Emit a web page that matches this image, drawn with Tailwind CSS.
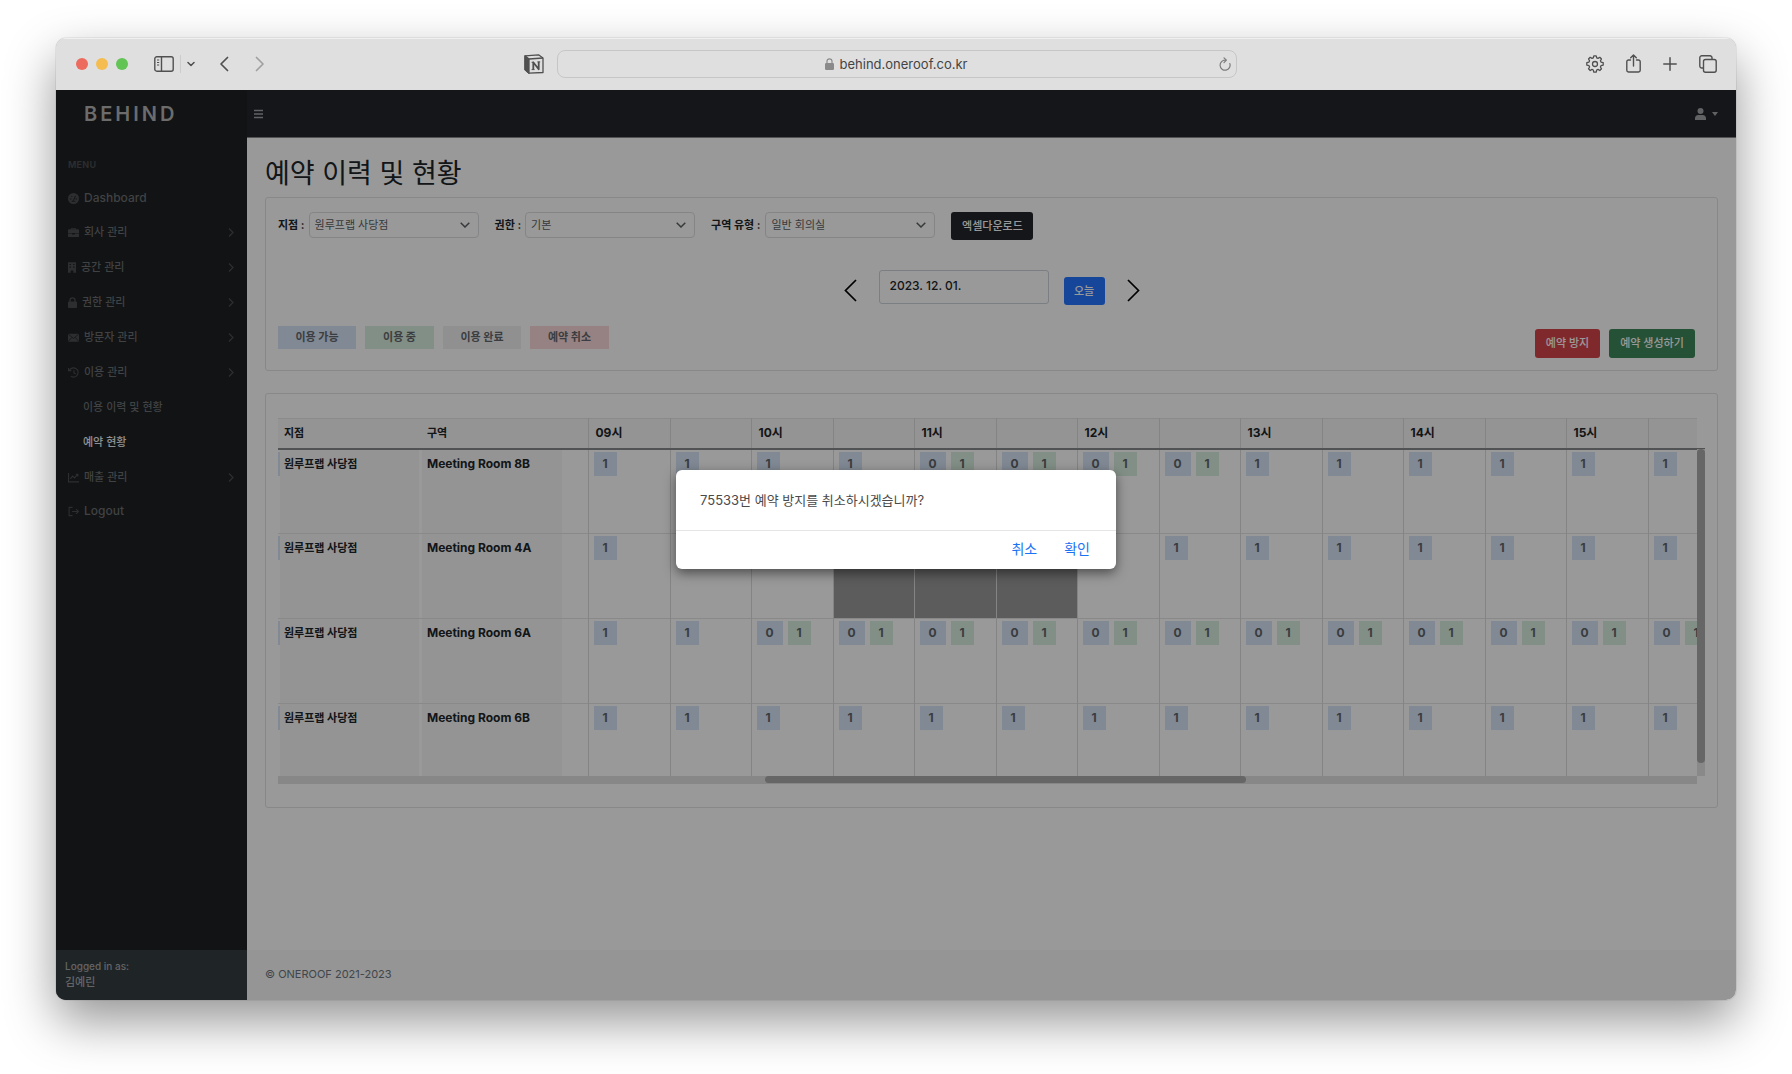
<!DOCTYPE html>
<html lang="ko">
  <head>
    <meta charset="UTF-8" />
    <meta name="viewport" content="width=device-width, initial-scale=1.0" />
    <title>BEHIND - 예약 이력 및 현황</title>

    <script src="https://cdn.jsdelivr.net/npm/@tailwindcss/browser@4"></script>
  </head>
  <body
    class="flex min-h-screen flex-col bg-white px-14 pt-[38px] pb-[74px] font-['Inter','Noto_Sans_CJK_KR',sans-serif] text-[11px] text-[#212529]"
  >
    <!-- Browser window -->
    <div
      class="flex flex-1 flex-col overflow-hidden rounded-[10px] shadow-[0_0_1px_rgba(0,0,0,0.6),0_21px_50px_rgba(0,0,0,0.42)]"
    >
      <!-- Browser toolbar -->
      <header
        class="flex h-[52px] shrink-0 items-center border-t border-[#f0f0f0] bg-[#dfdfdf] pb-[2px] text-[#505050]"
      >
        <div class="flex flex-1 items-center pl-5">
          <div class="flex gap-2">
            <span class="size-3 rounded-full bg-[#ed6a5e]"></span>
            <span class="size-3 rounded-full bg-[#f5bd4f]"></span>
            <span class="size-3 rounded-full bg-[#61c454]"></span>
          </div>
          <button class="ml-[26px]" aria-label="Sidebar">
            <svg class="h-4 w-5" viewBox="0 0 20 16" fill="none" stroke="currentColor" stroke-width="1.4">
              <rect x="0.8" y="0.8" width="18.4" height="14.4" rx="2" />
              <path d="M7.5 1v14" />
              <path d="M3 4h2.2M3 6.5h2.2M3 9h2.2" stroke-width="1" />
            </svg>
          </button>
          <span class="ml-1.5 h-[18px] w-px bg-[#cccccc]"></span>
          <button class="ml-1.5" aria-label="Tab groups">
            <svg class="size-2" viewBox="0 0 8 8" fill="none" stroke="currentColor" stroke-width="1.5" stroke-linecap="round" stroke-linejoin="round">
              <path d="M1 2.5l3 3 3-3" />
            </svg>
          </button>
          <button class="ml-6" aria-label="Back">
            <svg class="h-4 w-[10px]" viewBox="0 0 10 16" fill="none" stroke="currentColor" stroke-width="1.7" stroke-linecap="round" stroke-linejoin="round">
              <path d="M8.5 1.5L2 8l6.500 6.500" />
            </svg>
          </button>
          <button class="ml-[26px] text-[#a0a0a0]" aria-label="Forward">
            <svg class="h-4 w-[10px]" viewBox="0 0 10 16" fill="none" stroke="currentColor" stroke-width="1.7" stroke-linecap="round" stroke-linejoin="round">
              <path d="M1.500 1.500L8 8l-6.500 6.500" />
            </svg>
          </button>
          <button class="mr-[13px] ml-auto" aria-label="Notion">
            <svg class="size-5" viewBox="0 0 20 20" fill="none" stroke="currentColor" stroke-width="1.3" stroke-linejoin="round">
              <path d="M1 1.800L14.500 .8 19 4v14.500l-14 .7L1 15.500z" />
              <path d="M1 1.800L5 5v14.200L1 15.500z" fill="currentColor" />
              <path d="M5 5l14-1" />
              <path d="M9.300 15.500V8.300l5.400 7V7.800" stroke-width="1.800" />
              <path d="M7.600 8.300h2M7.600 15.600h3M13.400 7.900h2.800" stroke-width="1" />
            </svg>
          </button>
        </div>

        <div
          class="flex h-7 w-[680px] items-center rounded-lg border border-[#c6c6c6] pr-[5px] pl-4"
        >
          <div class="flex flex-1 items-center justify-center gap-[6px]">
            <svg class="h-3 w-[9px] text-[#8a8a8a]" viewBox="0 0 9 12">
              <rect y="5" width="9" height="7" rx="1.300" fill="currentColor" />
              <path d="M2 5.500V3.300a2.500 2.500 0 0 1 5 0v2.200" fill="none" stroke="currentColor" stroke-width="1.200" />
            </svg>
            <span class="text-[13px] leading-4 text-[#444444]">behind.oneroof.co.kr</span>
          </div>
          <button class="text-[#7c7c7c]" aria-label="Reload">
            <svg class="h-[14px] w-3" viewBox="0 0 12 14" fill="none" stroke="currentColor" stroke-width="1.200" stroke-linecap="round" stroke-linejoin="round">
              <path d="M10.800 6.500A5 5 0 1 1 6.500 3.200" />
              <path d="M5 0.800l2.400 2.400L5 5.600" />
            </svg>
          </button>
        </div>

        <div class="flex flex-1 items-center justify-end gap-[22px] pr-[19px]">
          <button aria-label="Settings">
            <svg class="size-[18px]" viewBox="0 0 18 18" fill="none" stroke="currentColor" stroke-width="1.300" stroke-linejoin="round">
              <path d="M7.800 0.800h2.400l.5 2 1.300.6 1.800-1.100 1.700 1.700-1.100 1.800.6 1.300 2.200.6v2.400l-2.200.6-.6 1.300 1.100 1.800-1.700 1.700-1.800-1.100-1.300.6-.5 2.200H7.800l-.5-2.200-1.300-.6-1.800 1.100-1.700-1.700 1.100-1.800-.6-1.300-2.200-.6V7.700l2.200-.6.6-1.300-1.100-1.800 1.700-1.700L6 3.400l1.300-.6z" />
              <circle cx="9" cy="9" r="2.500" />
            </svg>
          </button>
          <button aria-label="Share">
            <svg class="h-[19px] w-[15px]" viewBox="0 0 15 19" fill="none" stroke="currentColor" stroke-width="1.400" stroke-linecap="round" stroke-linejoin="round">
              <path d="M4.500 6H2.500A1.700 1.700 0 0 0 .8 7.700v8.600A1.700 1.700 0 0 0 2.500 18h10a1.700 1.700 0 0 0 1.700-1.700V7.700A1.700 1.700 0 0 0 12.500 6h-2" />
              <path d="M7.500 12V1M4.700 3.700L7.500 1l2.800 2.700" />
            </svg>
          </button>
          <button aria-label="New tab">
            <svg class="size-[14px]" viewBox="0 0 14 14" fill="none" stroke="currentColor" stroke-width="1.500" stroke-linecap="round">
              <path d="M7 .8v12.400M.8 7h12.400" />
            </svg>
          </button>
          <button aria-label="Tabs">
            <svg class="size-[18px]" viewBox="0 0 18 18" fill="none" stroke="currentColor" stroke-width="1.400" stroke-linejoin="round">
              <rect x="4.500" y="4.500" width="12.700" height="12.700" rx="2" />
              <path d="M4.500 13H3A2 2 0 0 1 .8 11V3A2 2 0 0 1 3 .8h8A2 2 0 0 1 13 3v1.500" />
            </svg>
          </button>
        </div>
      </header>

      <!-- Page -->
      <div class="relative flex flex-1">
        <!-- Sidebar -->
        <aside class="flex w-[191px] shrink-0 flex-col bg-[#1d2023] text-[#6c6e70]">
          <a
            href="#"
            class="pt-[10px] pl-7 text-[20px] leading-[28px] font-semibold tracking-[3px] text-[#b4b4b4]"
            >BEHIND</a
          >
          <p class="mt-[29px] pl-3 text-[9px] leading-4 font-bold tracking-wide text-[#484b4e]">MENU</p>

          <nav class="mt-2 flex flex-col font-medium">
            <a href="#" class="flex h-[34px] items-center gap-[5px] px-3 text-[12px]">
              <svg class="size-[11px] text-[#4a4d50]" viewBox="0 0 12 12">
                <circle cx="6" cy="6" r="6" fill="currentColor" />
                <path d="M6 8l2-4.500M2.500 6.500h.8M3.800 3.500l.5.500M9.500 6.500h-.8M4.500 9h3" stroke="#1c2023" stroke-linecap="round" />
              </svg>
              Dashboard
            </a>
            <a href="#" class="flex h-[35px] items-center gap-[5px] px-[13px] pl-3">
              <svg class="size-[11px] text-[#4a4d50]" viewBox="0 0 12 12">
                <path d="M3.500 2.500V1h5v1.500H11a1 1 0 0 1 1 1v3H0v-3a1 1 0 0 1 1-1zm1 0h3V2h-3zM0 7.200h4.500v1h3v-1H12V10a1 1 0 0 1-1 1H1a1 1 0 0 1-1-1z" fill="currentColor" fill-rule="evenodd" />
              </svg>
              <span class="flex-1">회사 관리</span>
              <svg class="h-[9px] w-[6px] text-[#4a4d50]" viewBox="0 0 6 9" fill="none" stroke="currentColor" stroke-width="1.300"><path d="M1 .5l4 4-4 4" /></svg>
            </a>
            <a href="#" class="flex h-[35px] items-center gap-[5px] px-[13px] pl-3">
              <svg class="h-[11px] w-2 text-[#4a4d50]" viewBox="0 0 9 12">
                <path d="M0 0h9v12H6V9.500H3V12H0zM1.800 2v1.300h1.500V2zm4 0v1.300h1.500V2zm-4 3v1.300h1.500V5zm4 0v1.300h1.500V5z" fill="currentColor" fill-rule="evenodd" />
              </svg>
              <span class="flex-1">공간 관리</span>
              <svg class="h-[9px] w-[6px] text-[#4a4d50]" viewBox="0 0 6 9" fill="none" stroke="currentColor" stroke-width="1.300"><path d="M1 .5l4 4-4 4" /></svg>
            </a>
            <a href="#" class="flex h-[35px] items-center gap-[5px] px-[13px] pl-3">
              <svg class="h-[11px] w-[9px] text-[#4a4d50]" viewBox="0 0 10 12">
                <rect y="5" width="10" height="7" rx="1" fill="currentColor" />
                <path d="M2.200 5.500V3.700a2.800 2.800 0 0 1 5.600 0v1.800" fill="none" stroke="currentColor" stroke-width="1.500" />
              </svg>
              <span class="flex-1">권한 관리</span>
              <svg class="h-[9px] w-[6px] text-[#4a4d50]" viewBox="0 0 6 9" fill="none" stroke="currentColor" stroke-width="1.300"><path d="M1 .5l4 4-4 4" /></svg>
            </a>
            <a href="#" class="flex h-[35px] items-center gap-[5px] px-[13px] pl-3">
              <svg class="size-[11px] text-[#4a4d50]" viewBox="0 0 12 12">
                <rect y="2" width="12" height="8.500" rx="1" fill="currentColor" />
                <path d="M.5 2.500L6 7l5.500-4.500M.5 10l3.500-4M11.500 10L8 6" fill="none" stroke="#1c2023" stroke-width=".8" />
              </svg>
              <span class="flex-1">방문자 관리</span>
              <svg class="h-[9px] w-[6px] text-[#4a4d50]" viewBox="0 0 6 9" fill="none" stroke="currentColor" stroke-width="1.300"><path d="M1 .5l4 4-4 4" /></svg>
            </a>
            <a href="#" class="flex h-[34px] items-center gap-[5px] px-[13px] pl-3">
              <svg class="size-[11px] text-[#4a4d50]" viewBox="0 0 12 12" fill="none" stroke="currentColor" stroke-width="1.200">
                <path d="M1.500 3.800A5 5 0 1 1 3 10M.6 1v3h3M6.500 3.500V6.500l2 1.200" />
              </svg>
              <span class="flex-1">이용 관리</span>
              <svg class="h-[9px] w-[6px] text-[#4a4d50]" viewBox="0 0 6 9" fill="none" stroke="currentColor" stroke-width="1.300"><path d="M1 .5l4 4-4 4" /></svg>
            </a>
            <div class="flex flex-col pt-px">
              <a href="#" class="flex h-[35px] items-center pl-[27px]">이용 이력 및 현황</a>
              <a href="#" class="flex h-[35px] items-center pl-[27px] text-[#f0f0f0]">예약 현황</a>
            </div>
            <a href="#" class="flex h-[34px] items-center gap-[5px] px-[13px] pl-3">
              <svg class="size-[11px] text-[#4a4d50]" viewBox="0 0 12 12" fill="none" stroke="currentColor" stroke-width="1.200">
                <path d="M.6 1v9.800H12M2.500 7.500L5 4.500l2 2 3.500-4M8.500 2.500h2.300v2.300" />
              </svg>
              <span class="flex-1">매출 관리</span>
              <svg class="h-[9px] w-[6px] text-[#4a4d50]" viewBox="0 0 6 9" fill="none" stroke="currentColor" stroke-width="1.300"><path d="M1 .5l4 4-4 4" /></svg>
            </a>
            <a href="#" class="flex h-[34px] items-center gap-[5px] px-3 text-[12px]">
              <svg class="size-[11px] text-[#4a4d50]" viewBox="0 0 12 12" fill="none" stroke="currentColor" stroke-width="1.200">
                <path d="M5 1.500H1.200v9H5M4.500 6h6.800M8.800 3.300L11.400 6 8.800 8.700" />
              </svg>
              Logout
            </a>
          </nav>

          <div class="mt-auto h-[50px] bg-[#353c41] px-[9px] pt-2 leading-4 font-medium text-[#a6a8aa]">
            <p class="text-[10px]">Logged in as:</p>
            <p>김예린</p>
          </div>
        </aside>

        <div class="flex min-w-0 flex-1 flex-col bg-white">
          <!-- Top bar -->
          <div class="flex h-12 items-center justify-between border-b border-[#8a8a8a] bg-[#22252a] pr-[18px] pl-[7px] text-[#a2a4a6]">
            <button aria-label="Toggle menu">
              <svg class="h-[10px] w-[9px]" viewBox="0 0 9 10" stroke="currentColor" stroke-width="1.300">
                <path d="M0 1.500h9M0 5h9M0 8.500h9" />
              </svg>
            </button>
            <button class="flex items-center gap-[6px]" aria-label="Account">
              <svg class="h-3 w-[11px]" viewBox="0 0 11 12" fill="currentColor">
                <circle cx="5.500" cy="3" r="3" />
                <path d="M0 12V10.500A3.500 3.500 0 0 1 3.500 7h4A3.500 3.500 0 0 1 11 10.500V12z" />
              </svg>
              <svg class="h-1 w-[6px]" viewBox="0 0 6 4" fill="currentColor"><path d="M0 0h6L3 4z" /></svg>
            </button>
          </div>

          <main class="flex-1 px-[18px] pt-[19px]">
            <h1 class="text-[27px] leading-[34px]">예약 이력 및 현황</h1>

            <!-- Filters -->
            <section class="mt-[6px] rounded-[3px] border border-[#e3e3e3] px-3 pt-[14px] pb-3">
              <div class="flex items-start font-bold">
                <label for="branch" class="leading-[26px]">지점 :</label>
                <div class="relative ml-1">
                  <select id="branch" class="h-[26px] w-[170px] appearance-none rounded border border-[#dcdee2] pl-[5px] font-normal text-[#5c5f63]">
                    <option>원루프랩 사당점</option>
                  </select>
                  <svg class="pointer-events-none absolute top-[10px] right-[9px] h-[6px] w-[10px]" viewBox="0 0 10 6" fill="none" stroke="#5c5f63" stroke-width="1.500"><path d="M.7.700L5 5 9.300.700" /></svg>
                </div>
                <label for="role" class="ml-4 leading-[26px]">권한 :</label>
                <div class="relative ml-1">
                  <select id="role" class="h-[26px] w-[170px] appearance-none rounded border border-[#dcdee2] pl-[5px] font-normal text-[#5c5f63]">
                    <option>기본</option>
                  </select>
                  <svg class="pointer-events-none absolute top-[10px] right-[9px] h-[6px] w-[10px]" viewBox="0 0 10 6" fill="none" stroke="#5c5f63" stroke-width="1.500"><path d="M.7.700L5 5 9.300.700" /></svg>
                </div>
                <label for="zone" class="ml-4 leading-[26px]">구역 유형 :</label>
                <div class="relative ml-[5px]">
                  <select id="zone" class="h-[26px] w-[170px] appearance-none rounded border border-[#dcdee2] pl-[5px] font-normal text-[#5c5f63]">
                    <option>일반 회의실</option>
                  </select>
                  <svg class="pointer-events-none absolute top-[10px] right-[9px] h-[6px] w-[10px]" viewBox="0 0 10 6" fill="none" stroke="#5c5f63" stroke-width="1.500"><path d="M.7.700L5 5 9.300.700" /></svg>
                </div>
                <button class="ml-4 h-7 w-[82px] rounded-[3px] bg-[#22252a] font-medium text-white">엑셀다운로드</button>
              </div>

              <div class="mt-[30px] flex h-[35px] items-start justify-center">
                <button class="mt-[9px]" aria-label="이전 날짜">
                  <svg class="h-[23px] w-[13px]" viewBox="0 0 13 23" fill="none" stroke="#000" stroke-width="1.700"><path d="M12 1L1.500 11.500 12 22" /></svg>
                </button>
                <input type="text" value="2023. 12. 01." aria-label="날짜" class="ml-[22px] h-[34px] w-[170px] rounded-[3px] border border-[#ced4da] px-[10px] pb-1 text-[12px] font-medium" />
                <button class="mt-[7px] ml-[15px] h-7 w-[41px] rounded-[3px] bg-[#2575ff] font-medium text-white">오늘</button>
                <button class="mt-[9px] ml-[22px]" aria-label="다음 날짜">
                  <svg class="h-[23px] w-[13px]" viewBox="0 0 13 23" fill="none" stroke="#000" stroke-width="1.700"><path d="M1 1l10.500 10.500L1 22" /></svg>
                </button>
              </div>

              <div class="mt-[21px] flex items-start justify-between">
                <div class="flex gap-[9px] text-center leading-[23px] font-bold text-[#63676b]">
                  <span class="w-[78px] bg-[#d7e4f7]">이용 가능</span>
                  <span class="w-[69px] bg-[#d9efdf]">이용 중</span>
                  <span class="w-[78px] bg-[#f1f1f1]">이용 완료</span>
                  <span class="w-[79px] bg-[#fbd9d9]">예약 취소</span>
                </div>
                <div class="mt-[3px] mr-[10px] flex gap-[9px] font-medium text-white">
                  <button class="h-[29px] w-[65px] rounded-[3px] bg-[#d5454c]">예약 방지</button>
                  <button class="h-[29px] w-[86px] rounded-[3px] bg-[#3e875a]">예약 생성하기</button>
                </div>
              </div>
            </section>

            <!-- Timetable -->
            <section class="mt-[22px] rounded-[3px] border border-[#e3e3e3] px-3 pt-6 pb-[23px]">
              <div class="flex">
                <div class="h-[358px] min-w-0 flex-1 overflow-hidden">
                  <table class="w-max table-fixed border-collapse text-left">
                    <colgroup id="columns"></colgroup>
                    <thead class="bg-[#f7f7f7] leading-4">
                      <tr id="hours" class="h-[30px] border-t border-b-2 border-t-[#e6e6e6] border-b-[#85898d]"></tr>
                    </thead>
                    <tbody id="rows"></tbody>
                  </table>
                </div>
                <div class="mt-[30px] w-2 border-t border-[#85898d] bg-[#e4e4e4]">
                  <div class="h-[314px] rounded-full bg-[#aaaaaa]"></div>
                </div>
              </div>
              <div class="mr-2 h-2 bg-[#e2e2e2]">
                <div class="ml-[34.300%] h-[7px] w-[33.900%] rounded-full bg-[#aaaaaa]"></div>
              </div>
            </section>
          </main>

          <footer class="flex h-[50px] items-center bg-[#f8f8f8] px-[18px] pb-[2px] text-[11px] text-[#6c757d]">
            © ONEROOF 2021-2023
          </footer>
        </div>

        <!-- Confirm dialog -->
        <div class="absolute inset-0 flex items-center justify-center bg-black/40 pb-[52px]">
          <div
            role="dialog"
            aria-modal="true"
            class="w-[440px] rounded-md bg-white shadow-[0_4px_12px_rgba(0,0,0,0.5)]"
          >
            <p class="px-6 py-5 text-[13px] leading-5 text-[#4a4a4a]">75533번 예약 방지를 취소하시겠습니까?</p>
            <div class="flex justify-end gap-[27px] border-t border-[#e5e5e5] px-[26px] pt-2 pb-[10px] text-[14px] leading-5 text-[#1a73f5]">
              <button>취소</button>
              <button>확인</button>
            </div>
          </div>
        </div>
      </div>
    </div>

    <script>
      const slots = ["09시", "", "10시", "", "11시", "", "12시", "", "13시", "", "14시", "", "15시", ""];

      // a = available, u = in use (one in use, none available), x = blocked
      const rooms = [
        { name: "Meeting Room 8B", slots: "aaaauuuuaaaaaa" },
        { name: "Meeting Room 4A", slots: "aaaxxxaaaaaaaa" },
        { name: "Meeting Room 6A", slots: "aauuuuuuuuuuuu" },
        { name: "Meeting Room 6B", slots: "aaaaaaaaaaaaaa" },
      ];

      const available = (n) =>
        `<span class="inline-block bg-[#d7e4f7] px-[9px] text-center leading-6">${n}</span>`;
      const inUse = (n) =>
        `<span class="ml-[5px] inline-block bg-[#d9efdf] px-[9px] text-center leading-6">${n}</span>`;

      const renderSlot = (state) => {
        if (state === "x") {
          return `<td class="border-l border-[#dcdcdc] bg-[#999999]"></td>`;
        }
        const chips = state === "u" ? available(0) + inUse(1) : available(1);
        return `<td class="overflow-hidden border-l border-[#dcdcdc] pt-[2px] pl-[5px] text-[12px] font-bold whitespace-nowrap">${chips}</td>`;
      };

      // Fixed columns: edge of the hidden id column, branch, gap, room, gap
      document.getElementById("columns").innerHTML =
        `<col class="w-[2px]" /><col class="w-[139px]" /><col class="w-[3px]" /><col class="w-[140px]" /><col class="w-[26px]" />` +
        slots
          .map((_, i) => (i % 2 ? `<col class="w-[81px]" />` : `<col class="w-[82px]" />`))
          .join("");

      document.getElementById("hours").innerHTML =
        `<th></th><th class="pl-1">지점</th><th></th><th class="pl-[5px]">구역</th><th></th>` +
        slots
          .map((hour) => `<th class="border-l border-[#dcdcdc] pl-[7px] text-[12px]">${hour}</th>`)
          .join("");

      document.getElementById("rows").innerHTML = rooms
        .map(
          (room) => `
          <tr class="h-[85px] border-b border-[#e4e4e4] align-top text-[#5f6468]">
            <td class="pt-[2px]"><div class="h-6 bg-[#d7e4f7]"></div></td>
            <th class="bg-[#f7f7f7] pt-[6px] pl-1 leading-4 text-[#212529]">원루프랩 사당점</th>
            <td></td>
            <th class="bg-[#f7f7f7] pt-[6px] pl-[5px] text-[12px] leading-4 text-[#212529]">${room.name}</th>
            <td></td>
            ${[...room.slots].map(renderSlot).join("")}
          </tr>`
        )
        .join("");
    </script>
  </body>
</html>
